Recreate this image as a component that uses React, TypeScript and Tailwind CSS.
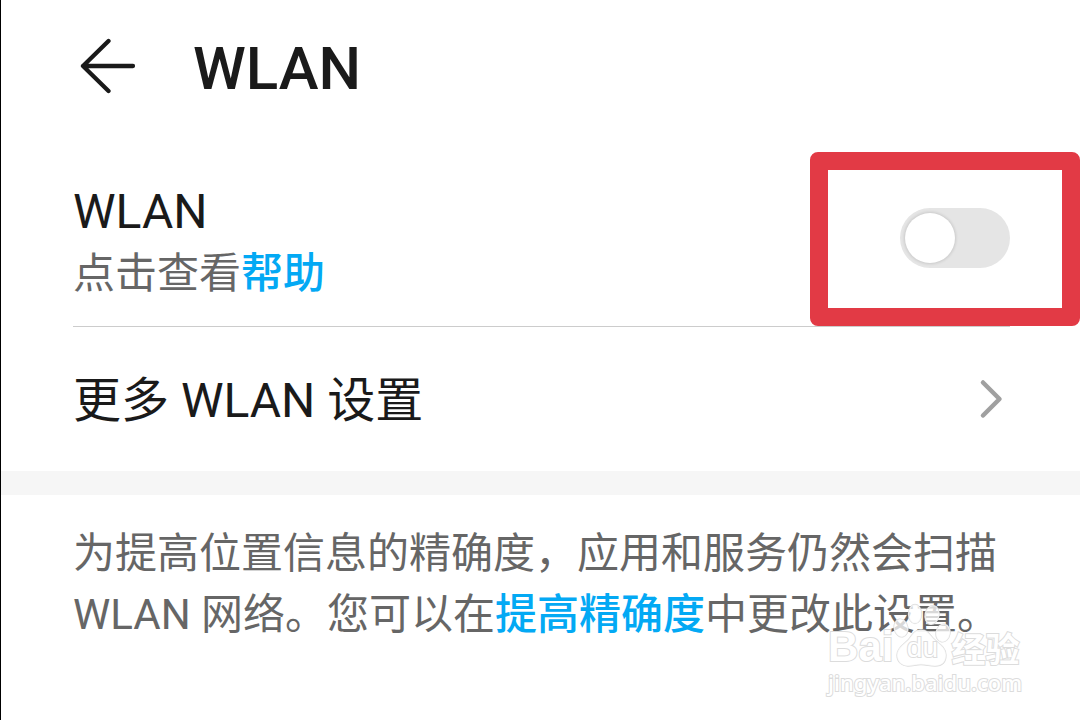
import React, { useState } from "react";

interface SwitchProps {
  id: string;
  checked: boolean;
  onChange: (checked: boolean) => void;
}

const Switch = ({ id, checked, onChange }: SwitchProps) => {
  return (
    <input
      id={id}
      type="checkbox"
      role="switch"
      checked={checked}
      onChange={(e) => onChange(e.target.checked)}
      className="block h-[60px] w-[110px] cursor-pointer appearance-none rounded-full bg-[#e5e5e5] p-[5px] before:block before:size-[50px] before:rounded-full before:bg-white before:shadow-[0_0_3px_1px_rgba(0,0,0,0.12)] checked:bg-[#03a9f4] checked:before:ml-[50px]"
    />
  );
};

const BackIcon = () => (
  <svg
    width="56"
    height="56"
    viewBox="0 0 56 56"
    fill="none"
    stroke="#1a1a1a"
    strokeWidth="4.3"
    strokeLinecap="round"
    strokeLinejoin="round"
    aria-hidden="true"
  >
    <path d="M28.5 3 3 28 28.5 53M3 28h50" />
  </svg>
);

const ChevronIcon = () => (
  <svg
    width="24"
    height="40"
    viewBox="0 0 24 40"
    fill="none"
    stroke="#a0a0a0"
    strokeWidth="4.5"
    strokeLinecap="round"
    strokeLinejoin="round"
    className="shrink-0"
    aria-hidden="true"
  >
    <path d="M4 3.5 20.5 20 4 36.5" />
  </svg>
);

const PawIcon = () => (
  <svg
    width="58"
    height="68"
    viewBox="0 0 58 68"
    fill="#fff"
    fillOpacity="0.75"
    stroke="#dcdcdc"
    strokeWidth="1.3"
    className="col-start-1 row-start-1"
    aria-hidden="true"
  >
    <ellipse cx="8" cy="28" rx="6.8" ry="9" transform="rotate(-12 8 28)" />
    <ellipse cx="22" cy="14" rx="6.5" ry="9.5" />
    <ellipse cx="39" cy="15" rx="7" ry="9.5" transform="rotate(12 39 15)" />
    <ellipse cx="50" cy="33" rx="7" ry="9" transform="rotate(10 50 33)" />
    <path d="M28 30c-7 0-9 5-12 9S4 47 4 55c0 7 5 11 11 11 5 0 8-1.500 13-1.500S37 66 42 66c7 0 11-4 11-11 0-8-8-12-12-16s-6-9-13-9Z" />
  </svg>
);

const Watermark = () => {
  return (
    <div className="pointer-events-none absolute right-[58px] bottom-6 font-['Noto_Sans','Noto_Sans_CJK_SC',sans-serif] leading-none text-white [paint-order:stroke_fill] [-webkit-text-stroke:2px_#dcdcdc]">
      <div className="flex items-end">
        <span className="font-['Liberation_Sans',sans-serif] text-[42px] leading-[42px] font-bold">
          Bai
        </span>
        <div className="grid items-end justify-items-center">
          <PawIcon />
          <span className="col-start-1 row-start-1 font-['Liberation_Sans',sans-serif] text-[28px] leading-10">
            du
          </span>
        </div>
        <span className="text-[34px] leading-[38px] font-bold">经验</span>
      </div>
      <p className="text-[22px] leading-7 font-medium">jingyan.baidu.com</p>
    </div>
  );
};

export default function App() {
  const [enabled, setEnabled] = useState(false);

  return (
    <main className="relative min-h-screen overflow-hidden border-l border-black bg-white font-[Roboto,'Noto_Sans_CJK_SC',sans-serif] text-[#1a1a1a]">
      <header className="flex items-start gap-[57px] pt-8 pb-7 pl-[79px]">
        <button type="button" aria-label="返回" className="pt-1.5">
          <BackIcon />
        </button>
        <h1 className="text-[60px] leading-[74px] font-medium">WLAN</h1>
      </header>

      <section className="ml-[72px] mr-[70px] flex items-start justify-between border-b border-[#cccccc] pt-12 pb-5">
        <div>
          <label htmlFor="wlan" className="block text-[48px] leading-[60px]">
            WLAN
          </label>
          <p className="text-[42px] leading-16 text-[#666666]">
            点击查看
            <a href="#help" className="font-medium text-[#03a9f4]">
              帮助
            </a>
          </p>
        </div>
        <div className="relative mt-[26px]">
          <Switch id="wlan" checked={enabled} onChange={setEnabled} />
          {/* highlight around the switch */}
          <div className="pointer-events-none absolute -top-14 -right-[70px] -bottom-[58px] -left-[90px] rounded-lg border-[18px] border-[#e23a45]" />
        </div>
      </section>

      <a
        href="#more"
        className="flex items-center justify-between py-[38px] pr-[77px] pl-[72px] text-[48px] leading-16"
      >
        <span className="pt-1">更多 WLAN 设置</span>
        <ChevronIcon />
      </a>

      <div className="h-6 bg-[#f6f6f6]" />

      <p className="pt-7 pr-[70px] pl-[72px] text-[42px] leading-[61px] text-[#666666]">
        为提高位置信息的精确度，应用和服务仍然会扫描 WLAN 网络。您可以在
        <a href="#accuracy" className="font-medium text-[#03a9f4]">
          提高精确度
        </a>
        中更改此设置。
      </p>

      <Watermark />
    </main>
  );
}
